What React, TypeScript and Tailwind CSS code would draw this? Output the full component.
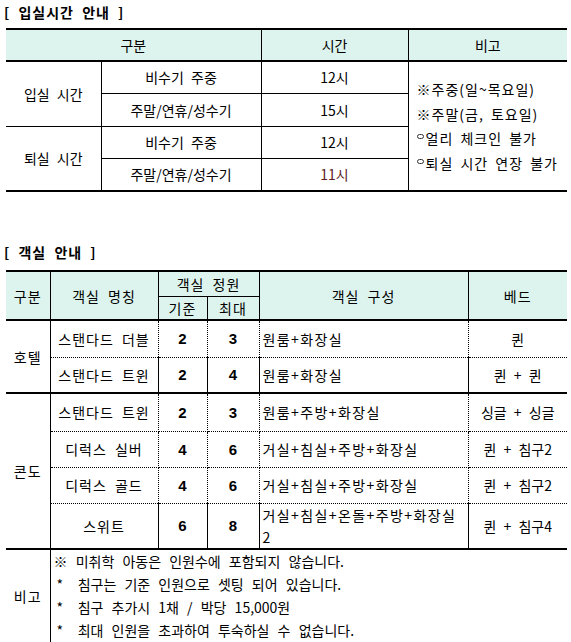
import React from "react";

const F = "font-['Noto_Sans_CJK_KR','Noto_Sans',sans-serif]";
const hd = "bg-[#dcf4ed] font-normal";

function Num({ v }: { v: string }) {
  return (
    <span className="font-['Liberation_Sans',Arial,sans-serif] font-bold text-[15px] tracking-normal">{v}</span>
  );
}

export default function App() {
  const solidB = "border-b border-black";
  const dotB = "border-b border-dotted border-black";
  const comp = "text-left pl-[3px] tracking-[1.4px] [word-spacing:0px]";
  return (
    <div className={`${F} w-[571px] h-[642px] bg-white text-[14px] text-black [word-spacing:4px] overflow-hidden`}>
      <div className="pl-[4px] pt-[3px] h-[28px] font-bold leading-[18px] text-[14px] tracking-[1px]">[ 입실시간 안내 ]</div>
      <table className="ml-[6px] w-[561px] table-fixed border-collapse text-center leading-none">
        <colgroup>
          <col className="w-[95px]" />
          <col className="w-[160px]" />
          <col className="w-[147px]" />
          <col className="w-[159px]" />
        </colgroup>
        <thead>
          <tr className="h-[32px]">
            <th colSpan={2} className={`${hd} border-t-2 border-b-2 border-black border-r`}>구분</th>
            <th className={`${hd} border-t-2 border-b-2 border-black border-r`}>시간</th>
            <th className={`${hd} border-t-2 border-b-2 border-black`}>비고</th>
          </tr>
        </thead>
        <tbody>
          <tr className="h-[32px]">
            <td rowSpan={2} className={`${solidB} border-r`}>입실 시간</td>
            <td className={`${solidB} border-r`}>비수기 주중</td>
            <td className={`${solidB} border-r`}>12시</td>
            <td rowSpan={4} className="border-b-2 border-black text-left pl-[8px]">
              <div className="flex flex-col leading-[24.5px] tracking-[1px] [word-spacing:3px]">
                <div>※주중(일~목요일)</div>
                <div>※주말(금, 토요일)</div>
                <div className="flex items-center">
                  <span className="w-[7px] h-[5px] mr-[2px] mb-[3px] rounded-full border border-[#333] shrink-0"></span>
                  <span>얼리 체크인 불가</span>
                </div>
                <div className="flex items-center">
                  <span className="w-[7px] h-[5px] mr-[2px] mb-[3px] rounded-full border border-[#333] shrink-0"></span>
                  <span>퇴실 시간 연장 불가</span>
                </div>
              </div>
            </td>
          </tr>
          <tr className="h-[33px]">
            <td className={`${solidB} border-r`}>주말/연휴/성수기</td>
            <td className={`${solidB} border-r`}>15시</td>
          </tr>
          <tr className="h-[32px]">
            <td rowSpan={2} className="border-b-2 border-black border-r">퇴실 시간</td>
            <td className={`${solidB} border-r`}>비수기 주중</td>
            <td className={`${solidB} border-r`}>12시</td>
          </tr>
          <tr className="h-[33px]">
            <td className="border-b-2 border-black border-r">주말/연휴/성수기</td>
            <td className="border-b-2 border-black border-r text-[#5e1c1c]">11시</td>
          </tr>
        </tbody>
      </table>

      <div className="pl-[4px] mt-[51px] h-[27px] font-bold leading-[18px] text-[14px] tracking-[1px]">[ 객실 안내 ]</div>
      <table className="ml-[6px] w-[561px] table-fixed border-collapse text-center leading-none tracking-[1px]">
        <colgroup>
          <col className="w-[44px]" />
          <col className="w-[108px]" />
          <col className="w-[49px]" />
          <col className="w-[52px]" />
          <col className="w-[209px]" />
          <col className="w-[99px]" />
        </colgroup>
        <thead>
          <tr className="h-[25px]">
            <th rowSpan={2} className={`${hd} border-t-2 border-b-2 border-black border-r`}>구분</th>
            <th rowSpan={2} className={`${hd} border-t-2 border-b-2 border-black border-r`}>객실 명칭</th>
            <th colSpan={2} className={`${hd} border-t-2 border-b border-black border-r`}>객실 정원</th>
            <th rowSpan={2} className={`${hd} border-t-2 border-b-2 border-black border-r`}>객실 구성</th>
            <th rowSpan={2} className={`${hd} border-t-2 border-b-2 border-black`}>베드</th>
          </tr>
          <tr className="h-[24px]">
            <th className={`${hd} border-b-2 border-black border-r`}>기준</th>
            <th className={`${hd} border-b-2 border-black border-r`}>최대</th>
          </tr>
        </thead>
        <tbody>
          <tr className="h-[37px]">
            <td rowSpan={2} className="border-b-2 border-black border-r">호텔</td>
            <td className={`${dotB} border-r border-r-black`}>스탠다드 더블</td>
            <td className={`${dotB} border-r border-r-black`}><Num v="2" /></td>
            <td className={`${dotB} border-r border-r-black`}><Num v="3" /></td>
            <td className={`${dotB} border-r border-r-black ${comp}`}>원룸+화장실</td>
            <td className={`${dotB} tracking-normal`}>퀸</td>
          </tr>
          <tr className="h-[36px]">
            <td className="border-b-2 border-black border-r">스탠다드 트윈</td>
            <td className="border-b-2 border-black border-r"><Num v="2" /></td>
            <td className="border-b-2 border-black border-r"><Num v="4" /></td>
            <td className={`border-b-2 border-black border-r ${comp}`}>원룸+화장실</td>
            <td className="border-b-2 border-black tracking-normal">퀸 + 퀸</td>
          </tr>
          <tr className="h-[38px]">
            <td rowSpan={4} className="border-b-2 border-black border-r">콘도</td>
            <td className={`${dotB} border-r border-r-black`}>스탠다드 트윈</td>
            <td className={`${dotB} border-r border-r-black`}><Num v="2" /></td>
            <td className={`${dotB} border-r border-r-black`}><Num v="3" /></td>
            <td className={`${dotB} border-r border-r-black ${comp}`}>원룸+주방+화장실</td>
            <td className={`${dotB} tracking-normal`}>싱글 + 싱글</td>
          </tr>
          <tr className="h-[36px]">
            <td className={`${dotB} border-r border-r-black`}>디럭스 실버</td>
            <td className={`${dotB} border-r border-r-black`}><Num v="4" /></td>
            <td className={`${dotB} border-r border-r-black`}><Num v="6" /></td>
            <td className={`${dotB} border-r border-r-black ${comp}`}>거실+침실+주방+화장실</td>
            <td className={`${dotB} tracking-normal`}>퀸 + 침구2</td>
          </tr>
          <tr className="h-[36px]">
            <td className={`${dotB} border-r border-r-black`}>디럭스 골드</td>
            <td className={`${dotB} border-r border-r-black`}><Num v="4" /></td>
            <td className={`${dotB} border-r border-r-black`}><Num v="6" /></td>
            <td className={`${dotB} border-r border-r-black ${comp}`}>거실+침실+주방+화장실</td>
            <td className={`${dotB} tracking-normal`}>퀸 + 침구2</td>
          </tr>
          <tr className="h-[44px]">
            <td className="border-b-2 border-black border-r">스위트</td>
            <td className="border-b-2 border-black border-r"><Num v="6" /></td>
            <td className="border-b-2 border-black border-r"><Num v="8" /></td>
            <td className={`border-b-2 border-black border-r ${comp} leading-[22px]`}>
              거실+침실+온돌+주방+화장실
              <br />2
            </td>
            <td className="border-b-2 border-black tracking-normal">퀸 + 침구4</td>
          </tr>
          <tr className="h-[93px]">
            <td className="border-b-2 border-black border-r">비고</td>
            <td colSpan={5} className="border-b-2 border-black text-left pl-[3px] tracking-normal">
              <div className="flex flex-col leading-[23px] [word-spacing:5px]">
                <div>※ 미취학 아동은 인원수에 포함되지 않습니다.</div>
                <div><span className="inline-block w-[16px] pl-[3px]">*</span> 침구는 기준 인원으로 셋팅 되어 있습니다.</div>
                <div><span className="inline-block w-[16px] pl-[3px]">*</span> 침구 추가시 1채 / 박당 15,000원</div>
                <div><span className="inline-block w-[16px] pl-[3px]">*</span> 최대 인원을 초과하여 투숙하실 수 없습니다.</div>
              </div>
            </td>
          </tr>
        </tbody>
      </table>
    </div>
  );
}
